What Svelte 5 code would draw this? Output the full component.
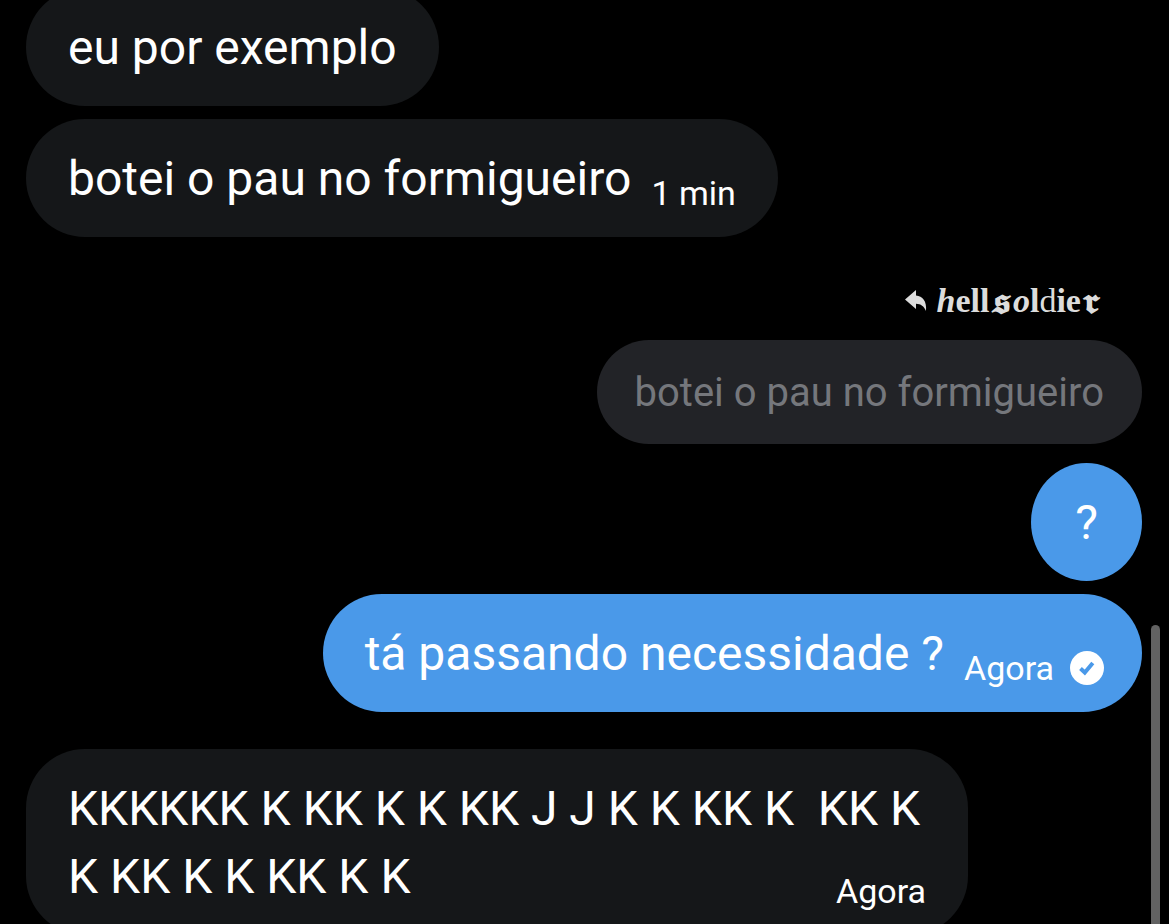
<script lang="ts">
  interface Glyph {
    text: string
    kind: 'bold' | 'italic' | 'fancy' | 'thin'
  }

  interface Message {
    id: number
    text: string
    mine?: boolean
    time?: string
    seen?: boolean
    quote?: { author: Glyph[]; text: string }
  }

  let messages: Message[] = [
    { id: 1, text: 'eu por exemplo' },
    { id: 2, text: 'botei o pau no formigueiro', time: '1 min' },
    {
      id: 3,
      text: '?',
      mine: true,
      quote: {
        author: [
          { text: 'h', kind: 'italic' },
          { text: 'ell', kind: 'bold' },
          { text: '𝖘', kind: 'fancy' },
          { text: 'o', kind: 'italic' },
          { text: 'l', kind: 'bold' },
          { text: 'd', kind: 'thin' },
          { text: 'ie', kind: 'bold' },
          { text: '𝖗', kind: 'fancy' }
        ],
        text: 'botei o pau no formigueiro'
      }
    },
    { id: 4, text: 'tá passando necessidade ?', mine: true, time: 'Agora', seen: true },
    { id: 5, text: 'KKKKKK K KK K K KK J J K K KK K  KK K K KK K K KK K K', time: 'Agora' }
  ]

  // extra space goes between groups from different senders
  function startsGroup(i: number) {
    return i > 0 && !!messages[i].mine !== !!messages[i - 1].mine
  }
</script>

<main class="chat">
  <ol class="messages">
    {#each messages as message, i (message.id)}
      <li class="message" class:mine={message.mine} class:group={startsGroup(i)}>
        {#if message.quote}
          <div class="author">
            <svg class="reply" viewBox="0 0 22 22" aria-hidden="true">
              <path d="M0 9.5 L11 0 V5.5 C17.5 6 22 11 21 21 C18.8 16.2 16 14 11 13.8 V19 Z" />
            </svg>
            <span class="name">{#each message.quote.author as glyph}<span class={glyph.kind}>{glyph.text}</span>{/each}</span>
          </div>
          <blockquote class="quote">{message.quote.text}</blockquote>
        {/if}
        <p class="bubble" class:round={message.text.length === 1}>{message.text}{#if message.time}<span class="meta"><time>{message.time}</time>{#if message.seen}<svg class="seen" viewBox="0 0 34 34" role="img" aria-label="Visto"><circle cx="17" cy="17" r="17" /><path d="M10.5 17.5 L14.8 21.5 L22.8 12" /></svg>{/if}</span>{/if}</p>
      </li>
    {/each}
  </ol>
  <div class="scrollbar"></div>
</main>

<style>
  :global(body) {
    margin: 0;
    background: #000;
  }

  .chat {
    position: relative;
    height: 100vh;
    overflow: hidden;
    background: #000;
    color: #fff;
    font-family: Roboto, 'Open Sans', sans-serif;
    font-size: 48px;
    line-height: 68px;
  }

  .messages {
    display: flex;
    flex-direction: column;
    gap: 13px;
    margin: -12px 0 0;
    padding: 0 27px 0 26px;
    list-style: none;
  }

  .message {
    display: flex;
    flex-direction: column;
    align-items: flex-start;
  }

  .message.mine {
    align-items: flex-end;
  }

  .message.group {
    margin-top: 24px;
  }

  .bubble {
    box-sizing: border-box;
    max-width: 942px;
    margin: 0;
    padding: 26px 42px 24px;
    border-radius: 59px;
    background: #151719;
    white-space: pre-wrap;
  }

  .mine .bubble {
    padding-right: 38px;
    background: #4a99e9;
  }

  .mine .bubble.round {
    min-width: 111px;
    padding: 26px 0 24px;
    border-radius: 50%;
    text-align: center;
  }

  .meta {
    display: flex;
    float: right;
    align-items: center;
    gap: 16px;
    margin: 29px 0 0 20px;
    font-size: 34px;
    line-height: 38px;
  }

  .seen {
    width: 34px;
    height: 34px;
    fill: #fff;
  }

  .seen path {
    fill: none;
    stroke: #4a99e9;
    stroke-width: 4;
  }

  .author {
    display: flex;
    align-items: center;
    gap: 10px;
    margin: 8px 40px 20px 0;
    color: #dcdcdc;
    line-height: 38px;
  }

  .name {
    height: 38px;
    font-family: 'Liberation Serif', serif;
    font-size: 34px;
  }

  .bold {
    font-weight: 700;
  }

  .italic {
    font-style: italic;
    font-weight: 700;
  }

  .thin {
    font-weight: 400;
  }

  .fancy {
    font-family: 'DejaVu Math TeX Gyre', 'DejaVu Serif', serif;
    font-size: 32px;
    font-weight: 700;
    line-height: 1px;
  }

  .reply {
    width: 22px;
    height: 22px;
    fill: #dcdcdc;
  }

  .quote {
    margin: 0 0 19px;
    padding: 23px 38px 21px;
    border-radius: 52px;
    background: #222327;
    color: #75777c;
    font-size: 40px;
    line-height: 60px;
  }

  .scrollbar {
    position: absolute;
    top: 625px;
    right: 9px;
    bottom: -9px;
    width: 9px;
    border-radius: 5px;
    background: #626262;
  }
</style>
